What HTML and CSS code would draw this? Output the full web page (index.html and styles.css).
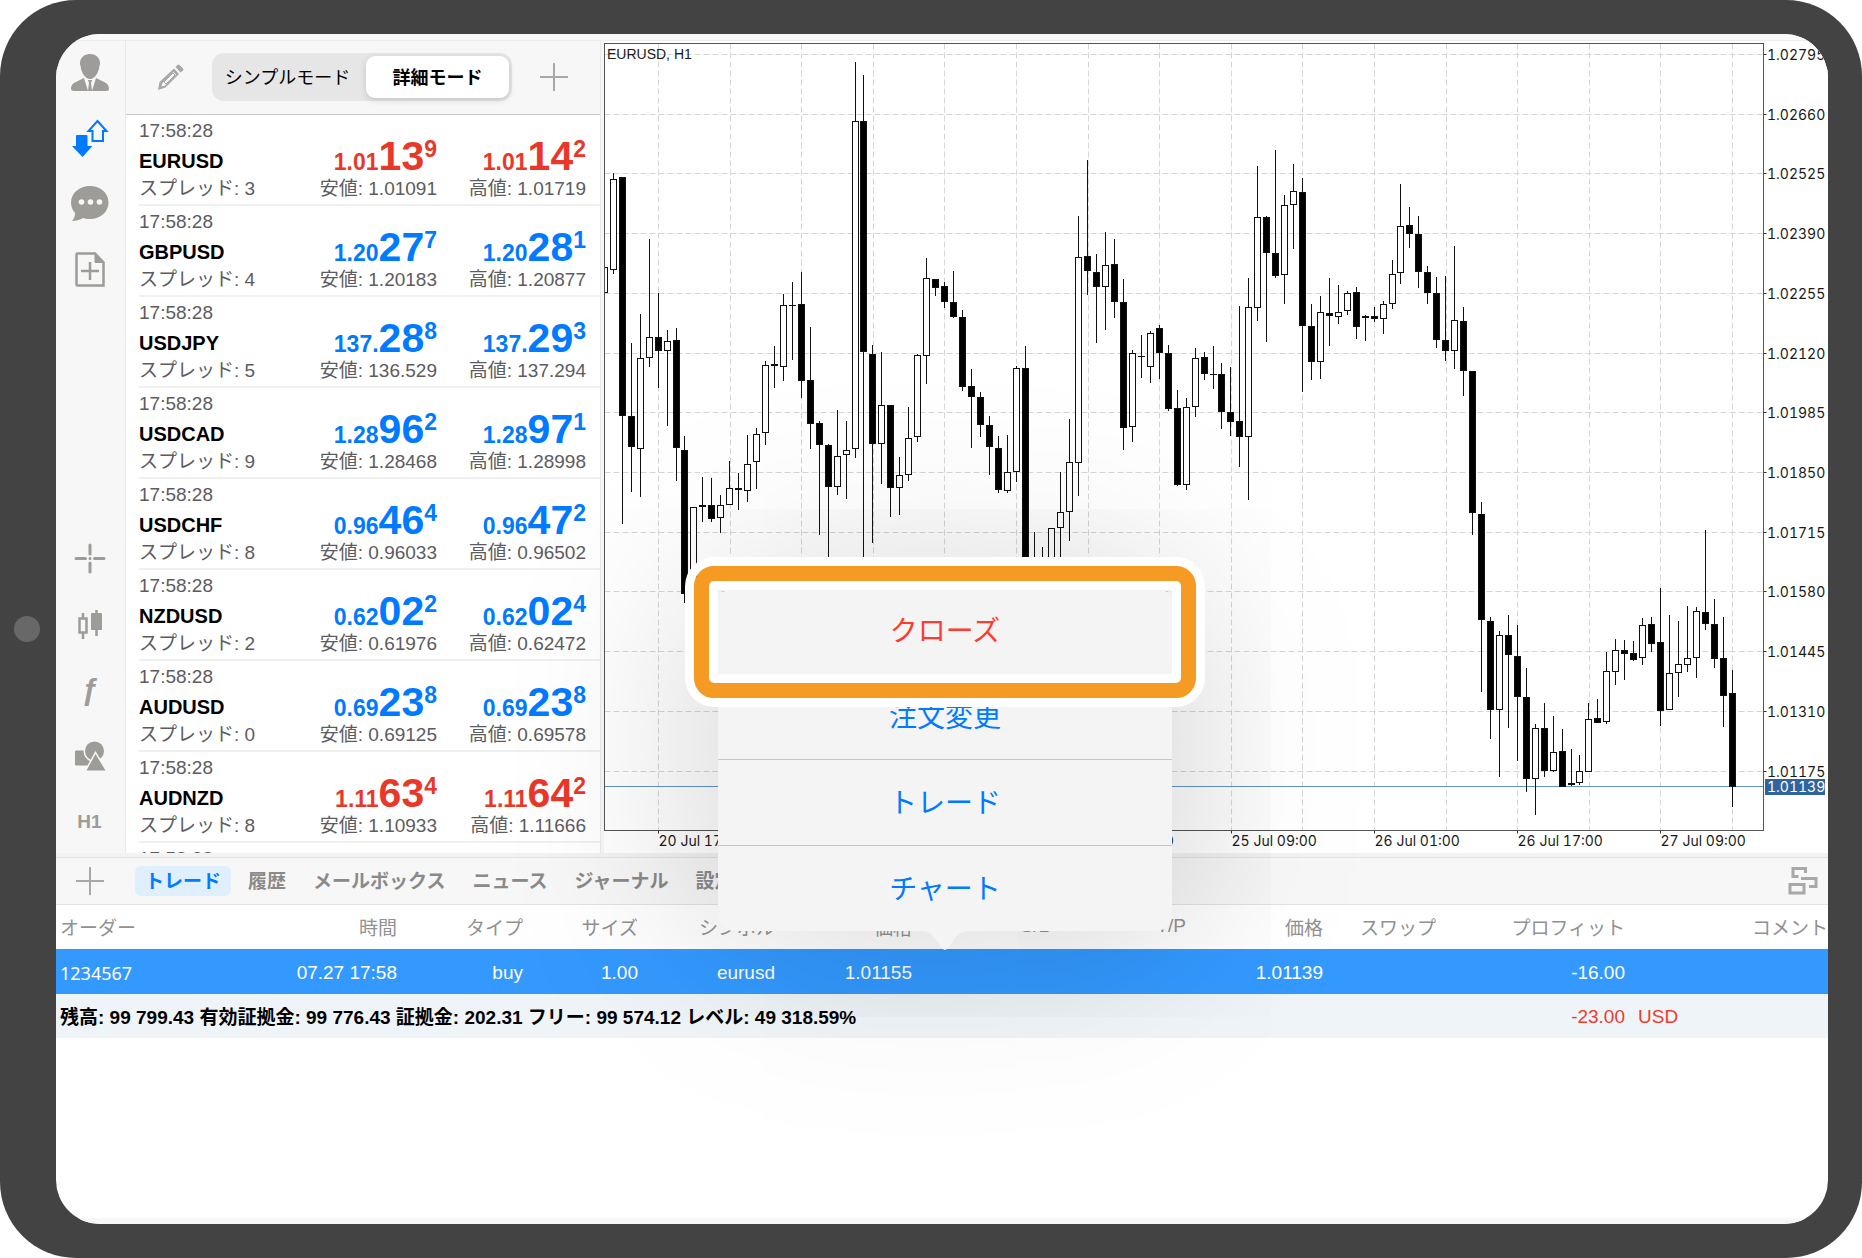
FILE: index.html
```html
<!DOCTYPE html>
<html lang="ja">
<head>
<meta charset="utf-8">
<meta name="viewport" content="width=device-width, initial-scale=1">
<title>EURUSD, H1</title>
<link rel="stylesheet" href="styles.css">
</head>
<body>
<div class="tablet">
  <span class="home-button"></span>
  <main class="screen">
    <div class="status-strip"></div>
    <div class="workspace">
      <nav class="sidebar">
        <div class="tool-group">
          <button class="tool" aria-label="アカウント"><svg viewBox="0 0 40 40"><path d="M20 1c6 0 10 4 10 9 0 1 0 2-.6 3C29 19 25 26 20 26s-9-7-9.400-13C10 12 10 11 10 10c0-5 4-9 10-9z"/><path d="M14 25l4 13H4c-2 0-3-1-3-2 0-7 6-7 13-11zM26 25l-4 13h14c2 0 3-1 3-2 0-7-6-7-13-11z"/><path d="M18 27h4l-1 3 1 8h-4l1-8z"/></svg></button>
          <button class="tool active" aria-label="気配値"><svg viewBox="0 0 40 40"><path class="thin" d="M27.500 2L36.500 12H33v10H22.500V12H18.500z"/><path d="M7 16h9.500q1 0 1 1v10h5L12.500 38 2 27h4V17q0-1 1-1z"/></svg></button>
          <button class="tool" aria-label="チャット"><svg viewBox="0 0 40 40"><path d="M20 1c10.500 0 18.500 7 18.500 16.500S30.500 34 20 34c-3 0-5-.4-7-1-3 2-7 3-11 3 2-2 3-5 3-8-2.500-3-4-6.500-4-10.500C1 8 9.500 1 20 1z"/><g class="cut"><circle cx="11.500" cy="17" r="2.800"/><circle cx="20.500" cy="17" r="2.800"/><circle cx="29.500" cy="17" r="2.800"/></g></svg></button>
          <button class="tool" aria-label="新規注文"><svg viewBox="0 0 40 40"><path class="line" d="M7.500 2.500H25l8.500 9V34.500h-26q-1 0-1-1v-30q0-1 1-1zM20 11v18M11 20h18"/><path d="M24.500 1.500L35 12H26q-1.500 0-1.500-1.500z"/></svg></button>
        </div>
        <div class="tool-group">
          <button class="tool" aria-label="クロスヘア"><svg viewBox="0 0 40 40"><path class="line round" d="M6 20.500h9.500M24.500 20.500H34M20 7v9M20 25v9M20 20.500h.1"/></svg></button>
          <button class="tool" aria-label="チャートタイプ"><svg viewBox="0 0 40 40"><path class="line" d="M9.500 14.500h7v14h-7zM13 9v5M13 29v6M26.500 6v26"/><rect x="21" y="9" width="11" height="17" rx="1"/></svg></button>
          <button class="tool func" aria-label="インディケータ">ƒ</button>
          <button class="tool" aria-label="オブジェクト"><svg viewBox="0 0 40 40"><rect x="5" y="14.500" width="15" height="15" rx="1"/><circle class="halo" cx="24.500" cy="15" r="9.500"/><path class="halo" d="M25.500 18L35.500 34.500h-19z"/></svg></button>
          <button class="tool period">H1</button>
        </div>
      </nav>

      <section class="quotes">
        <header class="quotes-header">
          <button class="plain" aria-label="編集"><svg width="26" height="28" viewBox="0 0 26 28"><path d="M16 5.500l5 5.500L7.500 24.500 0 27l1.500-8zM15.500 9L4.500 20l-1 3.500 3.500-1L18 11.500z" fill-rule="evenodd"/><path d="M6 19L15 10l2 2-9 9z" class="lead"/><path d="M17.500 4L19.500 2q1-1 2 0l3.500 3.500q1 1 0 2L22.500 9.500z"/></svg></button>
          <div class="segment">
            <button class="segment-item" aria-pressed="false">シンプルモード</button>
            <button class="segment-item selected" aria-pressed="true">詳細モード</button>
          </div>
          <button class="plain" aria-label="追加"><svg width="28" height="28" viewBox="0 0 28 28"><path d="M13 0h2v13h13v2H15v13h-2V15H0v-2h13z"/></svg></button>
        </header>
        <ul class="quote-list">
          <li class="quote down">
            <div class="cell"><span class="note">17:58:28</span><b class="symbol">EURUSD</b><span class="note">スプレッド: 3</span></div>
            <div class="cell"><span class="price">1.01<b>13</b><i>9</i></span><span class="note">安値: 1.01091</span></div>
            <div class="cell"><span class="price">1.01<b>14</b><i>2</i></span><span class="note">高値: 1.01719</span></div>
          </li>
          <li class="quote">
            <div class="cell"><span class="note">17:58:28</span><b class="symbol">GBPUSD</b><span class="note">スプレッド: 4</span></div>
            <div class="cell"><span class="price">1.20<b>27</b><i>7</i></span><span class="note">安値: 1.20183</span></div>
            <div class="cell"><span class="price">1.20<b>28</b><i>1</i></span><span class="note">高値: 1.20877</span></div>
          </li>
          <li class="quote">
            <div class="cell"><span class="note">17:58:28</span><b class="symbol">USDJPY</b><span class="note">スプレッド: 5</span></div>
            <div class="cell"><span class="price">137.<b>28</b><i>8</i></span><span class="note">安値: 136.529</span></div>
            <div class="cell"><span class="price">137.<b>29</b><i>3</i></span><span class="note">高値: 137.294</span></div>
          </li>
          <li class="quote">
            <div class="cell"><span class="note">17:58:28</span><b class="symbol">USDCAD</b><span class="note">スプレッド: 9</span></div>
            <div class="cell"><span class="price">1.28<b>96</b><i>2</i></span><span class="note">安値: 1.28468</span></div>
            <div class="cell"><span class="price">1.28<b>97</b><i>1</i></span><span class="note">高値: 1.28998</span></div>
          </li>
          <li class="quote">
            <div class="cell"><span class="note">17:58:28</span><b class="symbol">USDCHF</b><span class="note">スプレッド: 8</span></div>
            <div class="cell"><span class="price">0.96<b>46</b><i>4</i></span><span class="note">安値: 0.96033</span></div>
            <div class="cell"><span class="price">0.96<b>47</b><i>2</i></span><span class="note">高値: 0.96502</span></div>
          </li>
          <li class="quote">
            <div class="cell"><span class="note">17:58:28</span><b class="symbol">NZDUSD</b><span class="note">スプレッド: 2</span></div>
            <div class="cell"><span class="price">0.62<b>02</b><i>2</i></span><span class="note">安値: 0.61976</span></div>
            <div class="cell"><span class="price">0.62<b>02</b><i>4</i></span><span class="note">高値: 0.62472</span></div>
          </li>
          <li class="quote">
            <div class="cell"><span class="note">17:58:28</span><b class="symbol">AUDUSD</b><span class="note">スプレッド: 0</span></div>
            <div class="cell"><span class="price">0.69<b>23</b><i>8</i></span><span class="note">安値: 0.69125</span></div>
            <div class="cell"><span class="price">0.69<b>23</b><i>8</i></span><span class="note">高値: 0.69578</span></div>
          </li>
          <li class="quote down">
            <div class="cell"><span class="note">17:58:28</span><b class="symbol">AUDNZD</b><span class="note">スプレッド: 8</span></div>
            <div class="cell"><span class="price">1.11<b>63</b><i>4</i></span><span class="note">安値: 1.10933</span></div>
            <div class="cell"><span class="price">1.11<b>64</b><i>2</i></span><span class="note">高値: 1.11666</span></div>
          </li>
          <li class="quote"><div class="cell"><span class="note">17:58:28</span></div></li>
        </ul>
      </section>

      <section class="chart">
        <svg id="chart" viewBox="601 41 1227 812" role="img" aria-label="EURUSD, H1"></svg>
      </section>
    </div>

    <section class="terminal">
      <div class="tabs">
        <button class="plain add" aria-label="追加"><svg width="28" height="28" viewBox="0 0 28 28"><path d="M13 0h2v13h13v2H15v13h-2V15H0v-2h13z"/></svg></button>
        <button class="tab current">トレード</button>
        <button class="tab">履歴</button>
        <button class="tab">メールボックス</button>
        <button class="tab">ニュース</button>
        <button class="tab">ジャーナル</button>
        <button class="tab">設定</button>
        <button class="plain windows" aria-label="ウィンドウ"><svg width="30" height="30" viewBox="0 0 30 30"><path class="thick" d="M10.500 10.500H5v-8h12.500V7M14.500 14v-1.500h13.500v8h-7M2 18.500h14v8.500H2z"/></svg></button>
      </div>
      <table class="orders">
        <colgroup><col class="w-order"><col class="w-time"><col class="w-type"><col class="w-size"><col class="w-wide"><col class="w-wide"><col class="w-wide"><col class="w-wide"><col class="w-wide"><col class="w-swap"><col class="w-profit"><col class="w-comment"></colgroup>
        <thead>
          <tr><th>オーダー</th><th>時間</th><th>タイプ</th><th>サイズ</th><th>シンボル</th><th>価格</th><th>S/L</th><th>T/P</th><th>価格</th><th>スワップ</th><th>プロフィット</th><th>コメント</th></tr>
        </thead>
        <tbody>
          <tr class="position"><td>1234567</td><td>07.27 17:58</td><td>buy</td><td>1.00</td><td>eurusd</td><td>1.01155</td><td></td><td></td><td>1.01139</td><td></td><td>-16.00</td><td></td></tr>
          <tr class="summary"><td colspan="9">残高: 99 799.43 有効証拠金: 99 776.43 証拠金: 202.31 フリー: 99 574.12 レベル: 49 318.59%</td><td></td><td>-23.00</td><td class="currency">USD</td></tr>
        </tbody>
      </table>
      <div class="popover">
        <button class="choice danger">クローズ</button>
        <button class="choice">注文変更</button>
        <button class="choice">トレード</button>
        <button class="choice">チャート</button>
        <svg class="arrow" width="44" height="20" viewBox="0 0 44 20"><path d="M0 0C10 1 12 8 18 16Q22 22 26 16C32 8 34 1 44 0z"/></svg>
        <span class="highlight"></span>
      </div>
    </section>
    <div class="bottom-strip"></div>
  </main>
</div>
<script src="chart.js"></script>
</body>
</html>
```
FILE: styles.css
```css
* { box-sizing: border-box; }

body {
  margin: 0;
  background: #fff;
  color: #000;
  font-family: "Liberation Sans", "Noto Sans CJK JP", sans-serif;
  font-size: 19px;
}

button {
  margin: 0;
  padding: 0;
  border: 0;
  background: none;
  color: inherit;
  font: inherit;
  cursor: pointer;
}

svg { display: block; }

.tablet {
  position: relative;
  display: flex;
  min-height: 100vh;
  padding: 34px 34px 34px 56px;
  border-radius: 76px;
  background: #434343;
}

.home-button {
  position: absolute;
  left: 14px;
  top: calc(50% - 13px);
  width: 26px;
  height: 26px;
  border-radius: 50%;
  background: #686868;
}

.screen {
  flex: 1;
  min-width: 0;
  display: flex;
  flex-direction: column;
  overflow: hidden;
  border-radius: 44px;
  background: #fff;
}

.status-strip {
  height: 7px;
  border-bottom: 1px solid #ededed;
  background: #fafafa;
}

.workspace { display: flex; background: #f7f7f7; }

/* Tool column */
.sidebar {
  flex: 0 0 70px;
  display: flex;
  flex-direction: column;
  justify-content: space-between;
  align-items: center;
  padding: 12px 2px 11px 0;
  border-right: 1px solid #e9e9e9;
  color: #9d9c98;
}

.tool-group { display: flex; flex-direction: column; gap: 26px; }

.tool {
  display: grid;
  place-items: center;
  width: 40px;
  height: 40px;
}

.tool svg { width: 40px; height: 40px; fill: currentColor; }
.tool.active { color: #007aff; }
.tool .line { fill: none; stroke: currentColor; stroke-width: 2.5; }
.tool .thin { fill: none; stroke: currentColor; stroke-width: 2; }
.tool .round { stroke-width: 3; stroke-linecap: round; }
.tool .cut { fill: #f7f7f7; }
.tool .halo { stroke: #f7f7f7; stroke-width: 3; paint-order: stroke; }
.func { font-size: 30px; line-height: 36px; font-style: italic; font-weight: bold; }
.period { font-size: 19px; font-weight: bold; }

/* Quotes */
.quotes {
  flex: 0 0 475px;
  display: flex;
  flex-direction: column;
  border-right: 1px solid #e9e9e9;
  background: #fff;
}

.quotes-header {
  display: flex;
  justify-content: space-between;
  align-items: center;
  height: 74px;
  padding: 0 32px 2px;
  border-bottom: 1px solid #c8c8c8;
  background: #f7f7f7;
}

.plain { color: #a8a8a6; }
.plain svg { fill: currentColor; }
.plain .lead { fill: none; stroke: currentColor; stroke-width: 1; }
.plain .thick { fill: none; stroke: currentColor; stroke-width: 3; }

.segment {
  display: flex;
  width: 300px;
  height: 48px;
  padding: 3px;
  border-radius: 12px;
  background: #e6e6e6;
}

.segment-item { flex: 1; padding: 0 6px 2px 0; font-size: 18px; white-space: nowrap; }

.segment-item.selected {
  flex: 0 0 143px;
  padding: 0 0 2px;
  border-radius: 9px;
  background: #fff;
  box-shadow: 0 2px 6px rgba(0, 0, 0, 0.15);
  font-weight: bold;
}

.quote-list {
  flex: 1 1 0;
  min-height: 0;
  margin: 0;
  padding: 0 0 0 13px;
  overflow: hidden;
  list-style: none;
}

.quote {
  display: grid;
  grid-template-columns: 1fr 149px 149px;
  height: 91px;
  padding: 3px 14px 2px 0;
  border-bottom: 2px solid #f0f0f0;
}

.cell { display: flex; flex-direction: column; align-items: flex-end; }
.cell:first-child { align-items: flex-start; }

.note { line-height: 30px; height: 28px; color: #5c5c60; white-space: nowrap; }
.note:first-child { line-height: 26px; height: 26px; }

.symbol {
  height: 30px;
  font-size: 20px;
  font-weight: bold;
  line-height: 34px;
}

.price {
  height: 56px;
  padding-top: 20px;
  color: #007aff;
  font-size: 23px;
  font-weight: bold;
  line-height: 36px;
  white-space: nowrap;
}

.down .price { color: #e8382a; }
.price b { font-size: 41px; }
.price i { font-style: normal; line-height: 0; vertical-align: 13px; }

/* Chart */
.chart { flex: 1; min-width: 0; background: #fff; }
.chart svg { width: 100%; height: auto; }
.chart text { font-family: Inter, sans-serif; font-size: 14px; font-variant-numeric: tabular-nums; fill: #1a1a1a; }
.chart .title { font-family: "Liberation Sans", sans-serif; }
.chart .margin { fill: #f7f7f7; }
.chart .frame { fill: none; stroke: #555; }
.chart .grid { stroke: #d6d6d6; stroke-dasharray: 6 3; }
.chart .tick { stroke: #333; }
.chart .candle { stroke: #111; }
.chart .rise { fill: #fff; }
.chart .fall { fill: #000; }
.chart .bid { stroke: #6495c6; }
.chart .bid-box { fill: #2f659c; }
.chart .bid-text { fill: #fff; }

/* Terminal */
.terminal {
  position: relative;
  flex: 1;
  border-top: 4px solid #f3f3f3;
}

.tabs {
  display: flex;
  align-items: center;
  gap: 7px;
  height: 48px;
  padding: 0 10px 0 20px;
  border-top: 1px solid #e2e2e2;
  border-bottom: 1px solid #e2e2e2;
  background: #f7f7f7;
}

.add { margin-right: 24px; }
.windows { margin-left: auto; }

.tab {
  height: 30px;
  padding: 0 10px;
  border-radius: 6px;
  color: #8a8a8a;
  font-weight: bold;
  line-height: 32px;
}

.tab.current { background: #e0effd; color: #007aff; }

.orders {
  width: 100%;
  border-collapse: collapse;
  table-layout: fixed;
}

.w-order { width: 120px; }
.w-time { width: 224px; }
.w-type { width: 126px; }
.w-size { width: 115px; }
.w-wide { width: 137px; }
.w-swap { width: 113px; }
.w-profit { width: 189px; }
.w-comment { width: 200px; }

.orders th,
.orders td {
  padding: 0 3px 0 4px;
  text-align: right;
  white-space: nowrap;
}

.orders th { height: 44px; padding-bottom: 2px; color: #919191; font-weight: normal; }
.orders th:first-child,
.orders td:first-child { text-align: left; }
.orders th:last-child { padding-right: 0; }

.position { height: 45px; background: #3399ff; color: #fff; }
.orders .position td { padding-top: 2px; }
.position td:first-child { font-family: "Noto Sans", sans-serif; font-size: 18px; }

.summary { height: 44px; background: #eff4f9; font-weight: bold; }
.orders .summary td:first-child { padding-bottom: 2px; }
.orders .summary td:nth-child(n + 2) { padding-top: 2px; color: #ee3b2b; font-weight: normal; }
.orders .currency { padding-left: 10px; text-align: left; }

.bottom-strip { height: 6px; background: #f7f7f7; }

/* Context menu over the selected order */
.popover {
  position: absolute;
  top: -269px;
  left: calc(50% - 224px);
  width: 454px;
  border-radius: 16px;
  background: #f4f4f4;
  box-shadow: 0 0 210px rgba(0, 0, 0, 0.22);
}

.choice {
  display: block;
  width: 100%;
  height: 86px;
  padding-bottom: 3px;
  border-bottom: 1px solid #c6c6c6;
  color: #007aff;
  font-size: 28px;
}

.choice.danger { border-bottom-color: transparent; color: #ff3b30; }
.choice:nth-of-type(4) { height: 85px; border-bottom: 0; }

.arrow {
  position: absolute;
  top: 100%;
  left: calc(50% - 22px);
  fill: #f4f4f4;
}

.highlight {
  position: absolute;
  top: -22px;
  left: -24px;
  right: -24px;
  height: 132px;
  border: 15px solid #f59b23;
  border-radius: 20px;
  box-shadow: 0 0 0 9px #fff, inset 0 0 0 9px #fff;
}
```
FILE: chart.js
```js
// Candles as [rising, high, body top, body bottom, low], in chart units.
const candles = [
  [1,267,267,293,293],[1,173,179,270,274],[0,177,177,416,524],[0,343,416,447,492],[1,314,358,449,497],
  [1,239,337,358,367],[0,293,337,351,388],[1,330,341,351,426],[0,328,340,448,481],[0,436,450,594,603],
  [1,507,507,600,600],[0,477,505,507,522],[0,478,505,519,522],[1,495,505,518,533],[1,461,488,505,505],
  [0,473,488,490,510],[1,435,464,491,502],[1,428,434,462,489],[1,361,365,433,445],[0,346,364,366,388],
  [1,294,305,367,381],[0,282,305,305,360],[0,272,304,381,398],[0,327,380,424,449],[0,421,423,445,535],
  [0,444,445,487,557],[1,410,456,487,495],[1,421,450,455,499],[1,62,121,449,458],[0,75,121,352,560],
  [0,345,354,444,543],[1,352,405,444,484],[0,405,405,488,517],[1,457,475,488,515],[1,407,438,475,481],
  [1,354,355,437,442],[1,258,278,356,384],[0,279,279,288,296],[0,282,286,302,308],[0,271,302,317,318],
  [0,310,317,387,391],[0,369,386,397,448],[0,392,397,425,437],[0,416,425,447,475],[0,436,448,490,493],
  [1,435,472,491,493],[1,366,368,472,482],[0,346,368,600,600],[1,532,570,590,600],[1,547,570,590,600],
  [1,528,528,600,600],[1,472,512,528,560],[1,419,462,512,541],[1,216,257,463,496],[0,160,256,271,295],
  [0,254,272,287,343],[1,232,265,287,330],[0,239,264,302,318],[0,279,302,428,450],[1,350,353,427,442],
  [0,335,356,356,378],[1,331,333,367,383],[0,325,328,353,379],[0,345,353,409,411],[0,390,408,485,486],
  [1,398,407,485,490],[1,348,358,407,417],[0,352,357,374,380],[0,346,374,374,389],[0,363,374,412,429],
  [0,367,412,422,436],[0,306,421,437,467],[1,278,307,437,500],[1,166,217,308,321],[0,216,217,253,342],
  [0,150,253,276,278],[1,195,205,275,304],[1,164,191,205,249],[0,178,192,326,392],[0,304,326,362,380],
  [1,296,312,362,379],[0,278,313,316,346],[1,285,312,317,324],[1,291,293,311,315],[0,287,292,327,339],
  [0,315,316,318,341],[0,307,316,319,322],[1,301,304,319,334],[1,260,274,304,309],[1,184,226,273,284],
  [0,207,225,234,248],[0,216,234,272,288],[0,266,272,293,304],[0,277,293,340,348],[0,276,340,351,361],
  [1,246,320,351,369],[0,307,321,371,396],[0,371,371,513,535],[0,502,514,620,692],[0,617,621,710,739],
  [1,631,635,710,777],[0,615,635,655,728],[0,625,656,697,761],[0,668,697,779,792],[1,724,728,779,815],
  [0,703,728,771,777],[1,716,752,771,772],[0,729,751,787,787],[1,749,783,785,786],[1,755,771,783,785],
  [1,703,719,772,772],[0,699,718,723,723],[1,652,671,722,724],[1,639,650,672,685],[0,640,650,654,680],
  [0,641,653,660,661],[1,618,625,658,665],[0,617,624,644,652],[0,588,642,711,726],[1,615,673,710,710],
  [1,621,664,673,697],[1,606,658,665,672],[1,607,611,658,678],[0,530,612,624,630],[0,599,624,659,668],
  [0,617,658,696,727],[0,670,693,787,807]
];

const dates = ["20 Jul 17:00", "21 Jul 09:00", "22 Jul 01:00", "22 Jul 17:00",
  "25 Jul 09:00", "26 Jul 01:00", "26 Jul 17:00", "27 Jul 09:00"];

const left = 604.5, right = 1763.5, top_ = 43.5, bottom = 830.5;
const firstGridX = 658.5, gridX = 71.6, firstGridY = 54.5, gridY = 59.72;

const snap = v => Math.floor(v) + 0.5;
const line = (cls, x1, y1, x2, y2) =>
  `<line class="${cls}" x1="${x1}" y1="${y1}" x2="${x2}" y2="${y2}"/>`;
const label = (cls, x, y, s) => `<text class="${cls}" x="${x}" y="${y}">${s}</text>`;

let out = '<rect class="margin" x="601" y="41" width="3" height="812"/>';

for (let i = 0; i < 16; i++) {
  const x = snap(firstGridX + i * gridX);
  out += line("grid", x, top_, x, bottom);
  if (i % 2 === 0) {
    out += line("tick", x, bottom, x, bottom + 3);
    out += label("date", x, 846, dates[i / 2]);
  }
}

for (let i = 0; i < 13; i++) {
  const y = snap(firstGridY + i * gridY);
  out += line("grid", left, y, right, y);
  out += line("tick", right, y, right + 3, y);
  out += label("level", 1767, y + 5, (1.02795 - i * 0.00135).toFixed(5));
}

out += line("bid", left, 786.5, right, 786.5);

candles.forEach(([rising, high, t, b, low], i) => {
  const x = snap(604.4 + i * 8.95);
  const x0 = Math.max(x - 3, left);
  out += line("candle", x, high, x, low);
  out += `<rect class="candle ${rising ? "rise" : "fall"}" x="${x0}" y="${t + 0.5}" width="${x + 3 - x0}" height="${Math.max(b - t - 1, 0.01)}"/>`;
});

out += `<rect class="frame" x="${left}" y="${top_}" width="${right - left}" height="${bottom - top_}"/>`;
out += label("title", 607, 59, "EURUSD, H1");
out += '<rect class="bid-box" x="1765" y="779" width="60" height="16"/>';
out += label("bid-text", 1767, 792, "1.01139");

document.getElementById("chart").innerHTML = out;
```
